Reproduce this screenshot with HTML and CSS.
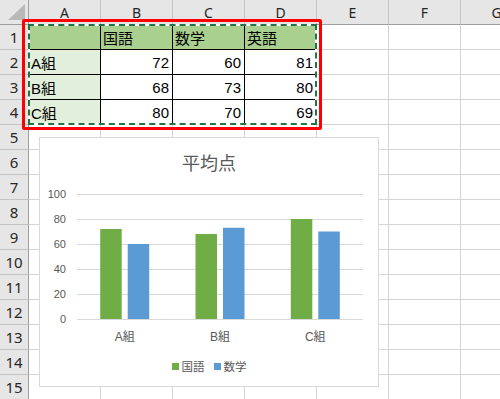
FILE: index.html
```html
<!DOCTYPE html>
<html lang="ja">
<head>
<meta charset="utf-8">
<title>平均点</title>
<link rel="stylesheet" href="styles.css">
</head>
<body>
<div class="sheet">
  <div class="corner"></div>
  <div class="ch">A</div><div class="ch">B</div><div class="ch">C</div><div class="ch">D</div><div class="ch">E</div><div class="ch">F</div><div class="ch">G</div>

  <div class="rh">1</div>
  <div class="t g"></div><div class="t g">国語</div><div class="t g">数学</div><div class="t g">英語</div><div></div><div></div><div></div>

  <div class="rh">2</div>
  <div class="t lg">A組</div><div class="t n">72</div><div class="t n">60</div><div class="t n">81</div><div></div><div></div><div></div>

  <div class="rh">3</div>
  <div class="t lg">B組</div><div class="t n">68</div><div class="t n">73</div><div class="t n">80</div><div></div><div></div><div></div>

  <div class="rh">4</div>
  <div class="t lg">C組</div><div class="t n">80</div><div class="t n">70</div><div class="t n">69</div><div></div><div></div><div></div>

  <div class="rh">5</div><div></div><div></div><div></div><div></div><div></div><div></div><div></div>
  <div class="rh">6</div><div></div><div></div><div></div><div></div><div></div><div></div><div></div>
  <div class="rh">7</div><div></div><div></div><div></div><div></div><div></div><div></div><div></div>
  <div class="rh">8</div><div></div><div></div><div></div><div></div><div></div><div></div><div></div>
  <div class="rh">9</div><div></div><div></div><div></div><div></div><div></div><div></div><div></div>
  <div class="rh">10</div><div></div><div></div><div></div><div></div><div></div><div></div><div></div>
  <div class="rh">11</div><div></div><div></div><div></div><div></div><div></div><div></div><div></div>
  <div class="rh">12</div><div></div><div></div><div></div><div></div><div></div><div></div><div></div>
  <div class="rh">13</div><div></div><div></div><div></div><div></div><div></div><div></div><div></div>
  <div class="rh">14</div><div></div><div></div><div></div><div></div><div></div><div></div><div></div>
  <div class="rh">15</div><div></div><div></div><div></div><div></div><div></div><div></div><div></div>
</div>

<div class="ants"></div>
<div class="sel"></div>

<div class="chart">
  <div class="title">平均点</div>
  <svg class="plot" width="338" height="182" viewBox="0 0 338 182">
    <g class="grid">
      <line x1="37" y1="20.5" x2="323" y2="20.5"/>
      <line x1="37" y1="45.5" x2="323" y2="45.5"/>
      <line x1="37" y1="70.5" x2="323" y2="70.5"/>
      <line x1="37" y1="95.5" x2="323" y2="95.5"/>
      <line x1="37" y1="120.5" x2="323" y2="120.5"/>
      <line x1="37" y1="145.5" x2="323" y2="145.5"/>
    </g>
    <g class="ylab">
      <text x="26" y="24">100</text>
      <text x="26" y="49">80</text>
      <text x="26" y="74">60</text>
      <text x="26" y="99">40</text>
      <text x="26" y="124">20</text>
      <text x="26" y="149">0</text>
    </g>
    <g>
      <rect class="b1" x="60.2" y="55" width="21.5" height="90"/>
      <rect class="b2" x="87.7" y="70" width="21.5" height="75"/>
      <rect class="b1" x="155.5" y="60" width="21.5" height="85"/>
      <rect class="b2" x="183" y="53.75" width="21.5" height="91.25"/>
      <rect class="b1" x="250.8" y="45" width="21.5" height="100"/>
      <rect class="b2" x="278.3" y="57.5" width="21.5" height="87.5"/>
    </g>
    <g class="xlab">
      <text x="84.7" y="167">A組</text>
      <text x="180" y="167">B組</text>
      <text x="275.3" y="167">C組</text>
    </g>
  </svg>
  <div class="legend">
    <span class="key"><i class="sw sw1"></i>国語</span>
    <span class="key"><i class="sw sw2"></i>数学</span>
  </div>
</div>
</body>
</html>
```

FILE: styles.css
```css
body {
  margin: 0;
  width: 500px;
  height: 399px;
  overflow: hidden;
  position: relative;
  background: #fff;
  font-family: "Liberation Sans", "Noto Sans CJK JP", sans-serif;
}

.sheet {
  display: grid;
  grid-template-columns: 29px repeat(7, 72px);
  grid-template-rows: repeat(16, 25px);
  width: 500px;
  overflow: hidden;
}

.sheet > div {
  box-sizing: border-box;
  border-right: 1px solid #d4d4d4;
  border-bottom: 1px solid #d4d4d4;
  display: flex;
  align-items: center;
  padding: 0 3px 0 2px;
  font-size: 15px;
  color: #000;
  white-space: nowrap;
  overflow: hidden;
}

.sheet > .ch {
  background: #e6e6e6;
  justify-content: center;
  border-right-color: #c4c4c4;
  border-bottom-color: #9e9e9e;
  font-family: "Noto Sans", sans-serif;
  font-size: 14px;
  color: #262626;
  padding: 0;
}

.sheet > .rh {
  background: #e6e6e6;
  justify-content: center;
  border-right-color: #9e9e9e;
  border-bottom-color: #c4c4c4;
  font-family: "Noto Sans", sans-serif;
  font-size: 15px;
  color: #262626;
  padding: 0;
}

.sheet > .corner {
  background: #e6e6e6;
  position: relative;
  border-right-color: #9e9e9e;
  border-bottom-color: #9e9e9e;
}

.corner::after {
  content: "";
  position: absolute;
  right: 3px;
  bottom: 4px;
  width: 17px;
  height: 16px;
  background: #b8b8b8;
  clip-path: polygon(100% 0, 100% 100%, 0 100%);
}

.sheet > .t {
  border-right-color: #000;
  border-bottom-color: #000;
}

.sheet > .g {
  background: #a9d08e;
}

.sheet > .lg {
  background: #e2efda;
}

.sheet > .n {
  justify-content: flex-end;
}

.ants {
  position: absolute;
  left: 28px;
  top: 24px;
  width: 289px;
  height: 101px;
  box-sizing: border-box;
  border: 2px solid #fff;
}

.ants::before {
  content: "";
  position: absolute;
  inset: -2px;
  border: 2px dashed #217346;
}

.sel {
  position: absolute;
  left: 22px;
  top: 19px;
  width: 300px;
  height: 111px;
  box-sizing: border-box;
  border: 3px solid #ff0000;
  border-radius: 2px;
}

.chart {
  position: absolute;
  left: 39px;
  top: 137px;
  width: 340px;
  height: 250px;
  box-sizing: border-box;
  border: 1px solid #d9d9d9;
  background: #fff;
  display: flex;
  flex-direction: column;
  align-items: center;
}

.title {
  margin-top: 12px;
  height: 24px;
  line-height: 24px;
  font-family: "Noto Sans CJK JP", sans-serif;
  font-size: 18px;
  color: #595959;
}

.plot {
  display: block;
}

.grid line {
  stroke: #d9d9d9;
  stroke-width: 1;
}

.ylab text {
  font-family: "Liberation Sans", sans-serif;
  font-size: 11px;
  fill: #595959;
  text-anchor: end;
}

.xlab text {
  font-family: "Liberation Sans", "Noto Sans CJK JP", sans-serif;
  font-size: 12px;
  fill: #595959;
  text-anchor: middle;
}

.b1 { fill: #70ad47; }
.b2 { fill: #5b9bd5; }

.legend {
  margin-top: 2px;
  height: 16px;
  line-height: 16px;
  display: flex;
  gap: 9px;
  font-family: "Noto Sans CJK JP", sans-serif;
  font-size: 11.5px;
  color: #595959;
}

.key {
  display: flex;
  align-items: center;
  gap: 3px;
}

.sw {
  display: block;
  width: 7px;
  height: 7px;
}

.sw1 { background: #70ad47; }
.sw2 { background: #5b9bd5; }
```
